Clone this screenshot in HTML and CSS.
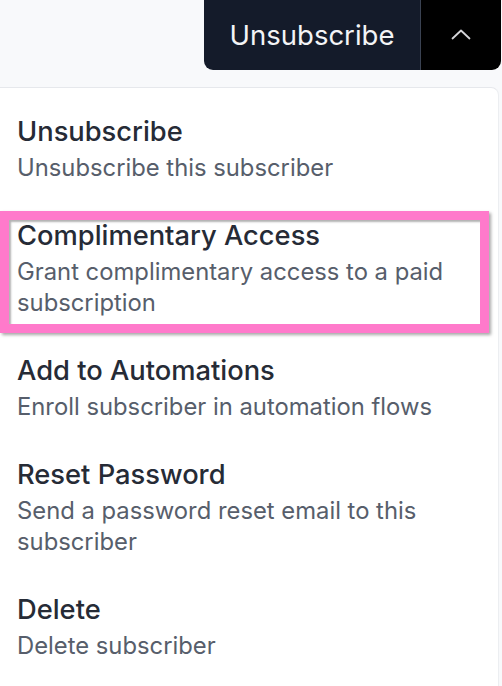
FILE: index.html
```html
<!DOCTYPE html>
<html lang="en">
<head>
<meta charset="utf-8">
<title>Subscriber actions</title>
<link rel="stylesheet" href="styles.css">
</head>
<body>
<div class="page">
  <div class="topbar">
    <div class="split-btn">
      <button class="split-main">Unsubscribe</button>
      <button class="split-toggle" aria-label="Toggle menu">
        <svg width="20" height="11" viewBox="0 0 20 11"><path d="M1.5 9.5 L10 1.5 L18.5 9.5" fill="none" stroke="#d4d4d8" stroke-width="1.8" stroke-linecap="round" stroke-linejoin="round"/></svg>
      </button>
    </div>
  </div>
  <div class="menu">
    <div class="item">
      <div class="item-title">Unsubscribe</div>
      <div class="item-desc">Unsubscribe this subscriber</div>
    </div>
    <div class="item">
      <div class="item-title">Complimentary Access</div>
      <div class="item-desc">Grant complimentary access to a paid subscription</div>
    </div>
    <div class="item">
      <div class="item-title">Add to Automations</div>
      <div class="item-desc">Enroll subscriber in automation flows</div>
    </div>
    <div class="item">
      <div class="item-title">Reset Password</div>
      <div class="item-desc">Send a password reset email to this subscriber</div>
    </div>
    <div class="item">
      <div class="item-title">Delete</div>
      <div class="item-desc">Delete subscriber</div>
    </div>
    <div class="highlight"></div>
  </div>
</div>
</body>
</html>
```

FILE: styles.css
```css
html, body {
  margin: 0;
  padding: 0;
}
body {
  background: #f8f9fb;
  font-family: Inter, "Noto Sans", sans-serif;
  width: 502px;
  height: 686px;
  overflow: hidden;
}
.page {
  display: flex;
  flex-direction: column;
}
.topbar {
  height: 87px;
  display: flex;
  justify-content: flex-end;
  align-items: flex-end;
  padding-right: 1px;
}
.split-btn {
  display: flex;
  height: 82px;
  margin-bottom: 17px;
  border-radius: 9px;
  overflow: hidden;
}
.split-main {
  width: 217px;
  border: none;
  background: #141b2a;
  color: #f3f4f6;
  font-family: Inter, "Noto Sans", sans-serif;
  font-size: 27.5px;
  padding: 12px 0 0 0;
  border-right: 1px solid #3a4252;
}
.split-toggle {
  width: 80px;
  border: none;
  background: #000;
  display: flex;
  align-items: center;
  justify-content: center;
  padding: 10px 0 0 0;
}
.menu {
  position: relative;
  background: #fff;
  border-top: 1px solid #e6e8ec;
  border-right: 1px solid #eceef1;
  border-top-right-radius: 8px;
  width: 498px;
  margin-left: -2px;
  padding: 9px 0 0 2px;
  height: 600px;
}
.item {
  display: flex;
  flex-direction: column;
  gap: 2px;
  padding: 17px 16px 18px 17px;
}
.item-title {
  font-size: 27.3px;
  font-weight: 450;
  line-height: 36px;
  color: #262b36;
}
.item-desc {
  font-size: 23.8px;
  line-height: 31px;
  color: #575e6b;
  max-width: 450px;
}
.highlight {
  position: absolute;
  left: 2px;
  top: 123px;
  width: 471px;
  height: 104px;
  border: 9px solid #ff7acb;
  box-shadow: 2px 2px 3px rgba(0,0,0,0.35), inset 2px 2px 2px rgba(0,0,0,0.3);
  pointer-events: none;
}
```
